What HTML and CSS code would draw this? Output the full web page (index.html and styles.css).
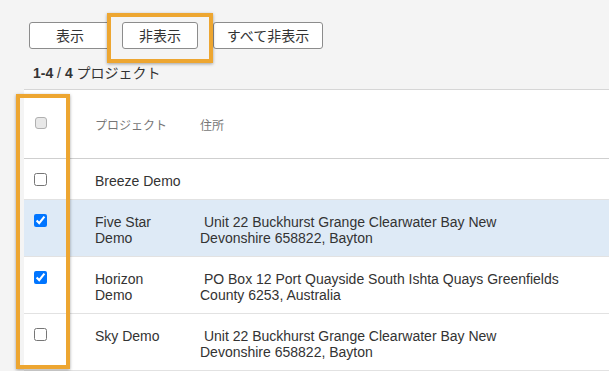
FILE: index.html
```html
<!DOCTYPE HTML>
<html>
	<head>
		<meta charset="utf-8">
		<link rel="stylesheet" href="styles.css">
	</head>
	<body>
		<div class="page">
			<div class="toolbar">
				<button class="btn btn-show">表示</button>
				<div class="spot">
					<button class="btn btn-hide">非表示</button>
				</div>
				<button class="btn btn-all">すべて非表示</button>
			</div>
			<p class="count"><b>1-4</b> / <b>4</b> プロジェクト</p>
			<table class="projects">
				<thead>
					<tr>
						<th class="col-check"><span class="check-all"></span></th>
						<th class="col-name">プロジェクト</th>
						<th class="col-address">住所</th>
						<th class="col-rest"></th>
					</tr>
				</thead>
				<tbody>
					<tr>
						<td class="col-check"><input type="checkbox"></td>
						<td class="col-name">Breeze Demo</td>
						<td class="col-address"></td>
						<td class="col-rest"></td>
					</tr>
					<tr class="selected">
						<td class="col-check"><input type="checkbox" checked></td>
						<td class="col-name">Five Star Demo</td>
						<td class="col-address">&nbsp;Unit 22 Buckhurst Grange Clearwater Bay New Devonshire 658822, Bayton</td>
						<td class="col-rest"></td>
					</tr>
					<tr>
						<td class="col-check"><input type="checkbox" checked></td>
						<td class="col-name">Horizon Demo</td>
						<td class="col-address">&nbsp;PO Box 12 Port Quayside South Ishta Quays Greenfields County 6253, Australia</td>
						<td class="col-rest"></td>
					</tr>
					<tr>
						<td class="col-check"><input type="checkbox"></td>
						<td class="col-name">Sky Demo</td>
						<td class="col-address">&nbsp;Unit 22 Buckhurst Grange Clearwater Bay New Devonshire 658822, Bayton</td>
						<td class="col-rest"></td>
					</tr>
				</tbody>
			</table>
			<div class="mark-column"></div>
		</div>
	</body>
</html>
```

FILE: styles.css
```css
* { margin: 0; padding: 0; box-sizing: border-box; }
html, body {
	height: 100%;
	overflow: hidden;
}
body {
	color: #333;
	background: #f4f4f4;
	font-family: 'Liberation Sans', 'Noto Sans CJK JP', Arial, sans-serif;
	font-size: 14px;
}
.page {
	position: relative;
	height: 100%;
}
.toolbar {
	display: flex;
	align-items: center;
	padding: 22px 0 0 29px;
	height: 49px;
}
.btn {
	background: #fff;
	border: 1px solid #8c8c8c;
	border-radius: 3px;
	color: #333;
	font-family: 'Noto Sans CJK JP', 'Liberation Sans', sans-serif;
	font-size: 14px;
	height: 27px;
	line-height: 25px;
	text-align: center;
}
.btn-show {
	width: 82px;
}
.btn-hide {
	width: 76px;
}
.btn-all {
	width: 110px;
}
.spot {
	background: #f4f4f4;
	border: 4px solid #eda631;
	box-shadow: 0 1px 3px rgba(0, 0, 0, 0.35);
	margin: -9px 0 -14px -4px;
	padding: 5px 11px 10px;
	position: relative;
}
.count {
	padding: 14px 0 0 33px;
	height: 40px;
	line-height: 20px;
}
.count b {
	font-weight: bold;
}
.projects {
	background: #fff;
	border-collapse: collapse;
	border-top: 1px solid #d6d6d6;
	margin-left: 24px;
	table-layout: fixed;
	width: 585px;
}
.projects th {
	border-bottom: 1px solid #cfcfcf;
	color: #777;
	font-size: 12px;
	font-weight: normal;
	height: 69px;
	text-align: left;
	vertical-align: middle;
}
.projects td {
	border-bottom: 1px solid #e2e2e2;
	line-height: 16px;
	padding-top: 14px;
	padding-bottom: 10px;
	vertical-align: top;
}
.col-check {
	width: 59px;
	padding-left: 10px;
}
.col-name {
	width: 105px;
	padding: 0 4px 0 12px;
}
.col-address {
	width: 391px;
	padding: 0 12px;
}
.projects td.col-check {
	padding-top: 14px;
}
.projects td input {
	display: block;
	margin: 0;
	width: 13px;
	height: 13px;
}
.check-all {
	background: #e8e8e8;
	border: 1px solid #b0b0b0;
	border-radius: 3px;
	display: block;
	margin: 0 0 2px 1px;
	width: 12px;
	height: 12px;
}
tr.selected td {
	background: #deeaf6;
}
.mark-column {
	border: 4px solid #eda631;
	box-shadow: 0 1px 3px rgba(0, 0, 0, 0.35);
	position: absolute;
	left: 16px;
	top: 94px;
	width: 54px;
	height: 275px;
}
```
